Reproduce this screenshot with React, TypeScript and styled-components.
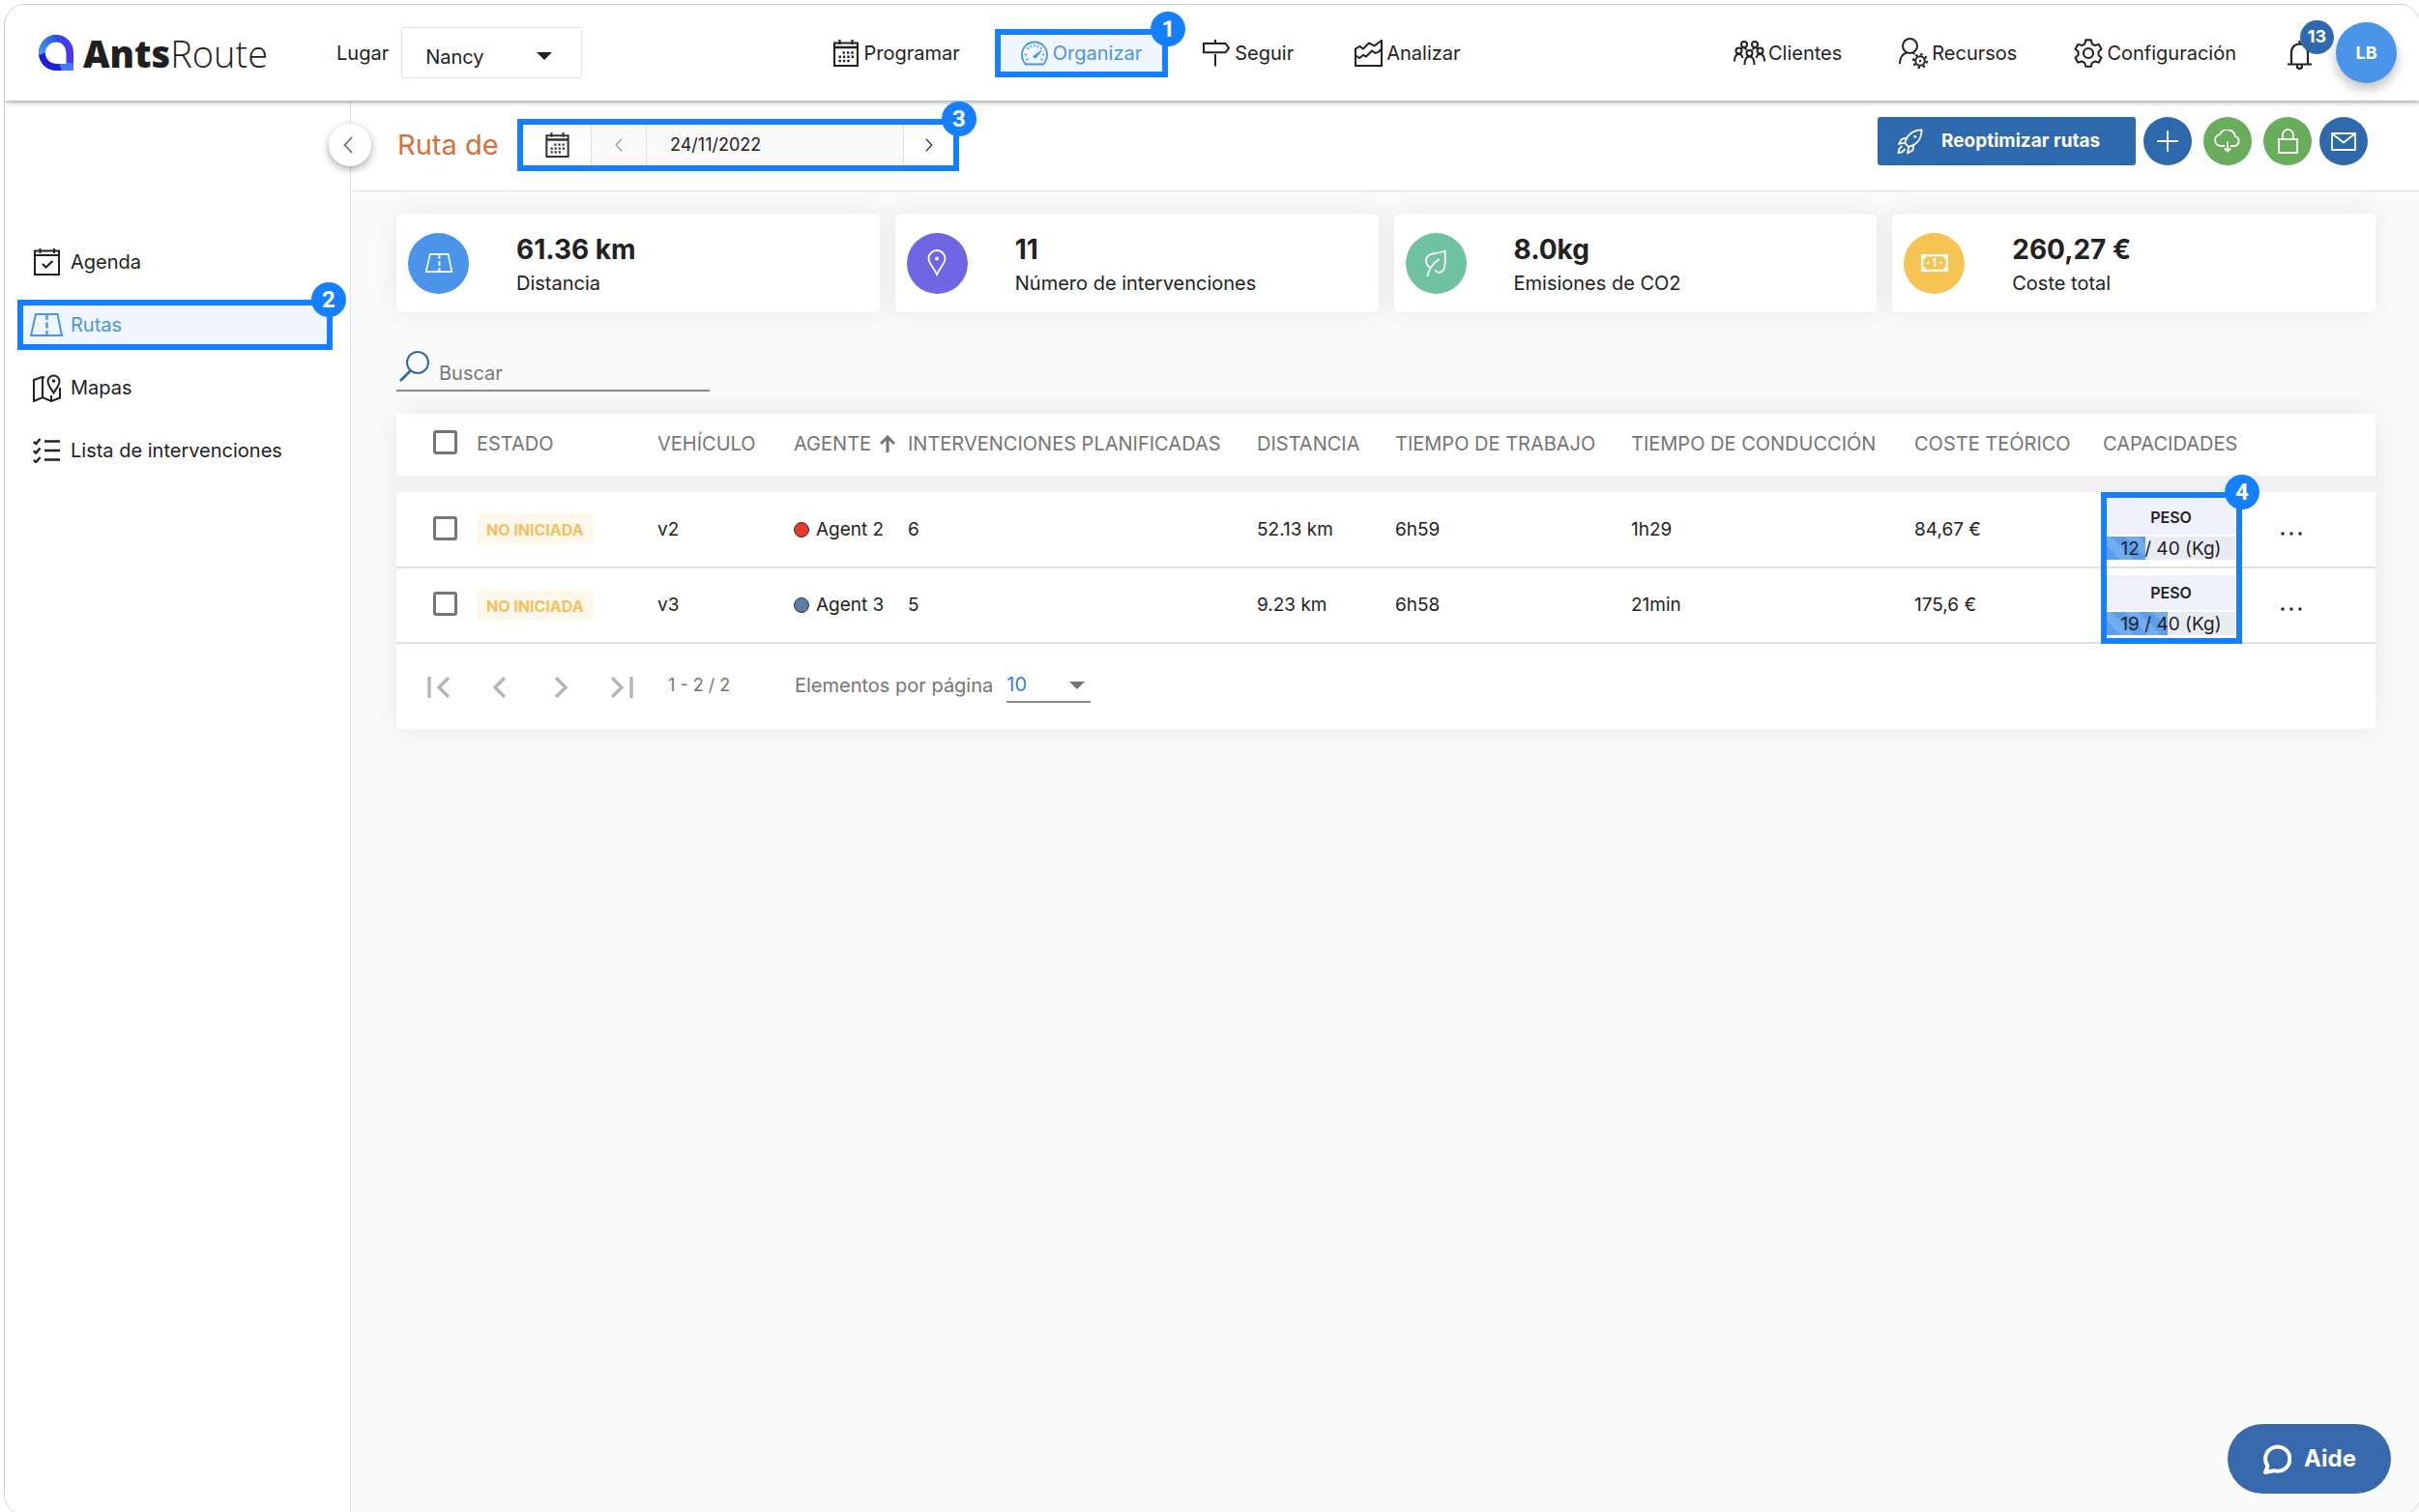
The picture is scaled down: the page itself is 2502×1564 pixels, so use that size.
import React from "react";
import styled, { createGlobalStyle, css } from "styled-components";

const c = {
  accent: "#1580ff",
  brand: "#2f69ad",
  sky: "#4a94e9",
  ink: "#222222",
  grey: "#757575",
  line: "#e0e0e0",
  canvas: "#fafafa",
  tint: "#eff6ff",
};

const GlobalStyle = createGlobalStyle`
  *, *::before, *::after { box-sizing: border-box; }
  body {
    margin: 0;
    background: #ffffff;
    color: ${c.ink};
    font-family: Inter, "Open Sans", sans-serif;
    font-size: 20px;
    line-height: 24px;
  }
  button, input, select { font: inherit; color: inherit; }
  svg { display: block; flex: none; }
`;

/* ---------- icons ---------- */

type IconProps = { w?: number; h?: number };

const CalendarIcon = ({ w = 26, h = 28 }: IconProps) => (
  <svg width={w} height={h} viewBox="0 0 26 28" fill="none" stroke="currentColor" strokeWidth="2.200">
    <path d="M1 3.500h24V27H1z" />
    <path d="M1 8h24" strokeWidth="2.600" />
    <path d="M6.500 0v5M19.500 0v5" />
    <path d="M9.500 13.500h12M5.500 17.800h16M5.500 22h12" strokeWidth="2.400" strokeDasharray="2.400 2" />
  </svg>
);

const GaugeIcon = () => (
  <svg width="28" height="26" viewBox="0 0 28 26" fill="none" stroke="currentColor" strokeWidth="1.800">
    <path d="M5 24.500C2.500 22 1 18.500 1 14.500a13 13 0 0 1 26 0c0 4-1.500 7.500-4 10z" />
    <path d="M14 4v2.500M6.500 7l1.600 1.700M3.800 14.500h2.400M21.500 7l-1.400 1.500M24.200 14.500h-2.400M5.500 20l2-1M22.500 20l-2-1M10 5l.8 2M18 5l-.8 2" strokeWidth="1.400" />
    <path d="M13 16.500 21 10.500 15 18z" fill="currentColor" strokeWidth="1.200" />
  </svg>
);

const SignIcon = () => (
  <svg width="28" height="28" viewBox="0 0 28 28" fill="none" stroke="currentColor" strokeWidth="2">
    <path d="M1 4h22.500L27 8.700l-3.500 4.600H1z" />
    <path d="M13 0v4M13 15v12.500" />
  </svg>
);

const ChartIcon = () => (
  <svg width="29" height="28" viewBox="0 0 29 28" fill="none" stroke="currentColor" strokeWidth="2">
    <path d="M1 27V9.500L5.500 7l3.500 2.500L15 3.500l5.500 2.800L28 1v26z" />
    <path d="M1 16.500l4 2.500 4-3 3 1.500 6-6 3.500 2.500 3-1L28 9.500" />
  </svg>
);

const PeopleIcon = () => (
  <svg width="33" height="26" viewBox="0 0 33 26" fill="none" stroke="currentColor" strokeWidth="2">
    <circle cx="11" cy="4" r="3" />
    <circle cx="22" cy="4" r="3" />
    <circle cx="5.500" cy="10.500" r="3" />
    <circle cx="16.500" cy="13" r="3" />
    <circle cx="27.500" cy="10.500" r="3" />
    <path d="M1 21.500c0-5 1.500-7.500 4.500-7.500 2 0 3.500 1.500 4 4M32 21.500c0-5-1.500-7.500-4.500-7.500-2 0-3.500 1.500-4 4M11.500 25c0-6 1.500-8.500 5-8.500s5 2.500 5 8.500M8.500 8c2-1.500 4-.5 5 1.500M24.500 8c-2-1.500-4-.5-5 1.500" />
  </svg>
);

const UserGearIcon = () => (
  <svg width="30" height="32" viewBox="0 0 30 32" fill="none" stroke="currentColor" strokeWidth="2">
    <circle cx="11.500" cy="8.500" r="7.500" />
    <path d="M1 27c0-6 2.500-10.500 7.500-11.500M14 15.500l2.500 1.500" />
    <circle cx="22" cy="24" r="4.800" />
    <circle cx="22" cy="24" r="6.800" strokeWidth="2.400" strokeDasharray="2.400 2.940" />
    <circle cx="22" cy="24" r="1.200" fill="currentColor" stroke="none" />
  </svg>
);

const GearIcon = () => (
  <svg width="30" height="32" viewBox="0 0 30 32" fill="none" stroke="currentColor" strokeWidth="2.200" strokeLinejoin="round">
    <path d="M12 1.500h6l1 4.200 3.300 1.900 4.200-1.300 3 5.200-3.200 3v3.800l3.200 3-3 5.200-4.200-1.300L19 27.100l-1 3.900h-6l-1-3.900-3.300-1.900-4.200 1.300-3-5.200 3.200-3v-3.800l-3.200-3 3-5.200 4.200 1.300L11 5.700z" transform="translate(1.100 1) scale(.93)" />
    <circle cx="15" cy="16" r="5" />
  </svg>
);

const BellIcon = () => (
  <svg width="25" height="30" viewBox="0 0 25 30" fill="none" stroke="currentColor" strokeWidth="2.200">
    <path d="M4 24V12c0-5 3.500-8.500 8.500-8.500S21 7 21 12v12" />
    <path d="M0 24.500h25M12.500 0v3.500" />
    <path d="M10 25v1.500a2.500 2.500 0 0 0 5 0V25" />
  </svg>
);

const AgendaIcon = () => (
  <svg width="27" height="28" viewBox="0 0 27 28" fill="none" stroke="currentColor" strokeWidth="2">
    <path d="M1 2.500h25V27H1zM1 7h25M6.500 0v5M21 0v5" />
    <path d="M9 16l3.500 3.500 7-6.500" strokeWidth="2.200" />
  </svg>
);

const RoadIcon = ({ w = 34, h = 24 }: IconProps) => (
  <svg width={w} height={h} viewBox="0 0 34 24" fill="none" stroke="currentColor" strokeWidth="2">
    <path d="M6 1h22.500L33 23H1z" />
    <path d="M17.500 2v5M17.500 9.500v6M17.500 18v5" strokeWidth="2.400" />
  </svg>
);

const MapIcon = () => (
  <svg width="29" height="29" viewBox="0 0 29 29" fill="none" stroke="currentColor" strokeWidth="2">
    <path d="M12 3.500 9.500 3 1 6v22l9-4 9 4 9-3.500V14" />
    <path d="M10 3v21M19 28v-6" />
    <path d="M21.500 19.500c-2.500-4.500-6-8-6-12a6 6 0 0 1 12 0c0 4-3.500 7.500-6 12z" />
    <circle cx="21.500" cy="7" r="1.800" fill="currentColor" stroke="none" />
  </svg>
);

const ChecklistIcon = () => (
  <svg width="28" height="26" viewBox="0 0 28 26" fill="none" stroke="currentColor" strokeWidth="2.600">
    <path d="M12 3.500h16M12 13h16M12 22.500h16" />
    <path d="M.8 4l2.500 2L7.500 1M.8 13.500l2.500 2 4.200-5M.8 23l2.500 2 4.200-5" strokeWidth="2.400" />
  </svg>
);

const ChevronIcon = ({ dir = "left", w = 10, h = 18 }: IconProps & { dir?: "left" | "right" }) => (
  <svg width={w} height={h} viewBox="0 0 10 18" fill="none" stroke="currentColor" strokeWidth="1.600">
    <path d={dir === "left" ? "M9 1 1.500 9 9 17" : "M1 1l7.500 8L1 17"} />
  </svg>
);

const RocketIcon = () => (
  <svg width="27" height="27" viewBox="0 0 28 28" fill="none" stroke="currentColor" strokeWidth="1.900" strokeLinejoin="round">
    <path d="M8.500 15.500C10.500 7.500 17 1.500 26.500 1.500 26.500 11 21 17.500 12.500 19.500z" />
    <path d="M10.500 10 5.500 11 2 16.500l6-1M18 17.500 17 23l-5.500 3.500 1-6.500" />
    <circle cx="19.500" cy="8.500" r="1.600" fill="currentColor" stroke="none" />
    <path d="M6 19c-2.500.5-4 3-4.500 7 4-.5 6.500-2 7-4.500" />
  </svg>
);

const PlusIcon = () => (
  <svg width="22" height="22" viewBox="0 0 22 22" stroke="currentColor" strokeWidth="1.800">
    <path d="M11 0v22M0 11h22" />
  </svg>
);

const CloudIcon = () => (
  <svg width="28" height="24" viewBox="0 0 28 24" fill="none" stroke="currentColor" strokeWidth="1.800">
    <path d="M11 17H7a6 6 0 0 1-1-11.900A8.500 8.500 0 0 1 22 7a5.200 5.200 0 0 1-.5 10H17" />
    <path d="M14 12.500V22M10.800 19.500 14 22.500l3.200-3" />
  </svg>
);

const LockIcon = () => (
  <svg width="21" height="26" viewBox="0 0 21 26" fill="none" stroke="currentColor" strokeWidth="1.800">
    <path d="M1 11h19v14H1zM5 11V6.500a5.500 5.500 0 0 1 11 0V11" />
  </svg>
);

const MailIcon = () => (
  <svg width="26" height="19" viewBox="0 0 26 19" fill="none" stroke="currentColor" strokeWidth="1.800">
    <path d="M1 1h24v17H1zM1.500 1.500 13 10.500l11.500-9" />
  </svg>
);

const PinIcon = () => (
  <svg width="20" height="28" viewBox="0 0 20 28" fill="none" stroke="currentColor" strokeWidth="1.800">
    <path d="M10 26C7 19 1.500 14.500 1.500 9.500a8.500 8.500 0 0 1 17 0c0 5-5.500 9.500-8.500 16.500z" />
    <circle cx="10" cy="9.500" r="2" fill="currentColor" stroke="none" />
  </svg>
);

const LeafIcon = () => (
  <svg width="24" height="28" viewBox="0 0 24 28" fill="none" stroke="currentColor" strokeWidth="1.800">
    <path d="M6 18.500C.5 15 .5 8.500 6 5.500 10 3.500 17 4 21.500 1.500 22 9 22.500 15 20.500 20c-1.500 4-6 5.500-9.500 1.500" />
    <path d="M3.500 28C4.500 20 9 14.500 15.500 10" />
  </svg>
);

const BillIcon = () => (
  <svg width="28" height="18" viewBox="0 0 28 18" fill="none" stroke="currentColor">
    <path d="M1.200 1.200h25.600v15.600H1.200z" strokeWidth="2.200" />
    <path d="M2 2h4L2 6zM26 2h-4l4 4zM2 16h4l-4-4zM26 16h-4l4-4z" fill="currentColor" stroke="none" />
    <path d="M12 6.500l2.200-1.500v8" strokeWidth="1.800" />
    <circle cx="7.500" cy="9" r="1.400" fill="currentColor" stroke="none" />
    <circle cx="20.500" cy="9" r="1.400" fill="currentColor" stroke="none" />
  </svg>
);

const SearchIcon = () => (
  <svg width="32" height="32" viewBox="0 0 32 32" fill="none" stroke={c.brand} strokeWidth="2">
    <circle cx="19" cy="12" r="11" />
    <path d="M11.500 20.500 1 31" strokeWidth="2.600" />
  </svg>
);

const SortIcon = () => (
  <svg width="16" height="18" viewBox="0 0 16 18" fill="none" stroke="currentColor" strokeWidth="3">
    <path d="M8 18V2M1 9l7-7L15 9" />
  </svg>
);

const CaretIcon = ({ w = 16, h = 8 }: IconProps) => (
  <svg width={w} height={h} viewBox="0 0 16 8" fill="currentColor">
    <path d="M0 0h16L8 8z" />
  </svg>
);

const PagerIcon = ({ kind }: { kind: "first" | "prev" | "next" | "last" }) => {
  const d = {
    first: "M2 0v22M22 1 12 11l10 10",
    prev: "M17 1 7 11l10 10",
    next: "M7 1l10 10L7 21",
    last: "M2 1l10 10L2 21M22 0v22",
  }[kind];
  return (
    <svg width="24" height="22" viewBox="0 0 24 22" fill="none" stroke="currentColor" strokeWidth="3.400">
      <path d={d} />
    </svg>
  );
};

const DotsIcon = () => (
  <svg width="22" height="4" viewBox="0 0 22 4" fill="currentColor">
    <circle cx="2" cy="2" r="1.700" />
    <circle cx="11" cy="2" r="1.700" />
    <circle cx="20" cy="2" r="1.700" />
  </svg>
);

const ChatIcon = () => (
  <svg width="30" height="31" viewBox="0 0 30 31" fill="none" stroke="currentColor" strokeWidth="4" strokeLinejoin="round">
    <path d="M5.500 22.500A12.600 12.600 0 1 1 12 27.200L3 29z" />
  </svg>
);

const LogoMark = () => (
  <svg width="36" height="37" viewBox="0 0 36 37">
    <defs>
      <clipPath id="logo-ring">
        <path clipRule="evenodd" d="M18 0a18 18 0 0 1 18 18v19H18A18 18.500 0 0 1 18 0zM18 7.500A11 11 0 0 0 18 30h10.500V18.500A10.500 11 0 0 0 18 7.500z" />
      </clipPath>
      <linearGradient id="logo-right" x1="0" y1="0" x2="1" y2="1">
        <stop offset="0" stopColor="#2453dc" />
        <stop offset="1" stopColor="#5a2bf0" />
      </linearGradient>
      <linearGradient id="logo-left" x1="1" y1="0" x2="0" y2="1">
        <stop offset="0" stopColor="#2a55dd" />
        <stop offset="1" stopColor="#45a6fa" />
      </linearGradient>
    </defs>
    <g clipPath="url(#logo-ring)">
      <rect width="36" height="37" fill="url(#logo-right)" />
      <path d="M0 0h18v15L0 22z" fill="url(#logo-left)" />
      <path d="M0 21l9-3 14 12v7H0z" fill="#1c1fe0" />
      <path d="M21 29h15v8H24z" fill="#3f7df5" />
    </g>
  </svg>
);

/* ---------- page shell ---------- */

const Page = styled.div`
  display: flex;
  min-height: 100vh;
  overflow: hidden;
`;

const Frame = styled.div`
  display: flex;
  flex: 1;
  flex-direction: column;
  margin: 4px -2px -4px 4px;
  border: 1px solid #cccccc;
  border-radius: 22px;
  background: #ffffff;
  overflow: hidden;
`;

const Header = styled.header`
  position: relative;
  z-index: 2;
  display: flex;
  align-items: center;
  height: 99px;
  padding: 0 24px 0 35px;
  background: #ffffff;
  box-shadow: 0 1px 6px rgba(0, 0, 0, 0.45);
`;

const Logo = styled.a`
  display: flex;
  align-items: center;
  gap: 10px;
  width: 308px;
  color: #1f1f1f;
  font-family: "Open Sans", sans-serif;
  font-size: 38px;
  font-weight: 300;
  line-height: 44px;
  text-decoration: none;
  b { font-weight: 800; }
`;

const PlaceField = styled.div`
  display: flex;
  align-items: center;
  gap: 13px;
`;

const SelectBox = styled.span<{ $lined?: boolean }>`
  position: relative;
  display: flex;
  align-items: center;
  select {
    appearance: none;
    border: 0;
    outline: 0;
    background: transparent;
    width: ${(p) => (p.$lined ? 87 : 187)}px;
    height: ${(p) => (p.$lined ? 36 : 53)}px;
    ${(p) =>
      p.$lined
        ? css`
            border-bottom: 2px solid #8a8a8a;
            color: #3b7de0;
            padding: 0;
          `
        : css`
            border: 1px solid ${c.line};
            border-radius: 3px;
            padding: 8px 24px 0;
          `}
  }
  svg {
    position: absolute;
    top: ${(p) => (p.$lined ? 14 : 26)}px;
    right: ${(p) => (p.$lined ? 6 : 31)}px;
    color: ${(p) => (p.$lined ? c.grey : c.ink)};
    pointer-events: none;
  }
`;

const LinkBar = styled.nav<{ $main?: boolean }>`
  display: flex;
  align-items: center;
  gap: ${(p) => (p.$main ? 9 : 6)}px;
  margin: ${(p) => (p.$main ? "0 auto" : "0")};
`;

const highlight = css`
  border-color: ${c.accent};
  background: ${c.tint};
  color: ${c.sky};
`;

const NavLink = styled.a<{ $active?: boolean }>`
  position: relative;
  display: flex;
  align-items: center;
  gap: 5px;
  height: 50px;
  padding: 0 21px;
  border: 6px solid transparent;
  color: ${c.ink};
  text-decoration: none;
  white-space: nowrap;
  ${(p) => p.$active && highlight}
`;

const IconSlot = styled.span<{ $w: number }>`
  display: flex;
  justify-content: center;
  width: ${(p) => p.$w}px;
`;

const Marker = styled.span`
  position: absolute;
  top: -24px;
  right: -24px;
  z-index: 3;
  display: grid;
  place-items: center;
  width: 36px;
  height: 36px;
  border-radius: 50%;
  background: ${c.accent};
  color: #ffffff;
  font-family: Roboto, sans-serif;
  font-size: 24px;
  font-weight: 700;
`;

const Account = styled.div`
  display: flex;
  align-items: center;
  gap: 25px;
  margin-left: 26px;
`;

const BellButton = styled.button`
  position: relative;
  padding: 4px 0 0;
  border: 0;
  background: none;
`;

const BellCount = styled.span`
  position: absolute;
  top: -17px;
  left: 13px;
  display: grid;
  place-items: center;
  width: 35px;
  height: 35px;
  border-radius: 50%;
  background: ${c.brand};
  color: #ffffff;
  font-size: 18px;
  font-weight: 700;
`;

const Avatar = styled.button`
  width: 63px;
  height: 63px;
  padding: 0;
  border: 0;
  border-radius: 50%;
  background: ${c.sky};
  color: #ffffff;
  font-size: 18px;
  font-weight: 700;
  box-shadow: 0 6px 12px rgba(0, 0, 0, 0.25);
`;

const Body = styled.div`
  display: flex;
  flex: 1;
`;

const Sidebar = styled.aside`
  position: relative;
  width: 358px;
  padding: 141px 18px 0 13px;
  border-right: 1px solid ${c.line};
  background: #ffffff;
`;

const SideNav = styled.nav`
  display: flex;
  flex-direction: column;
  gap: 13px;
`;

const SideLink = styled(NavLink)`
  height: 52px;
  padding: 0 7px;
  gap: 8px;
  ${Marker} { right: -20px; }
`;

const CollapseButton = styled.button`
  position: absolute;
  top: 24px;
  right: -22px;
  z-index: 1;
  display: grid;
  place-items: center;
  width: 44px;
  height: 44px;
  padding: 0 4px 0 0;
  border: 0;
  border-radius: 50%;
  background: #ffffff;
  color: #666666;
  box-shadow: 0 3px 8px rgba(0, 0, 0, 0.35);
`;

const Main = styled.main`
  flex: 1;
  min-width: 0;
  background: ${c.canvas};
`;

/* ---------- title bar ---------- */

const TitleBar = styled.div`
  display: flex;
  align-items: center;
  justify-content: space-between;
  height: 94px;
  padding: 0 54px 1px 48px;
  border-bottom: 1px solid ${c.line};
  background: #ffffff;
`;

const TitleGroup = styled.div`
  display: flex;
  align-items: center;
`;

const Title = styled.h1`
  width: 124px;
  margin: 0;
  color: #d8703c;
  font-size: 29px;
  font-weight: 400;
  line-height: 32px;
  white-space: nowrap;
`;

const DatePicker = styled.div`
  position: relative;
  display: flex;
  height: 54px;
  border: 6px solid ${c.accent};
  font-size: 18px;
`;

const DateButton = styled.button<{ $w: number; $muted?: boolean }>`
  display: grid;
  place-items: center;
  width: ${(p) => p.$w}px;
  padding: 0;
  border: 0 solid ${c.line};
  border-left-width: ${(p) => (p.$muted ? 1 : 0)}px;
  background: ${(p) => (p.$muted ? c.canvas : "#ffffff")};
  color: ${(p) => (p.$muted ? "#999999" : "#333333")};
`;

const DateInput = styled.input`
  width: 267px;
  padding: 0 24px;
  border: 1px solid ${c.line};
  border-width: 0 1px;
  outline: 0;
  background: ${c.canvas};
`;

const Actions = styled.div`
  display: flex;
  align-items: center;
  gap: 12px;
  padding-bottom: 8px;
`;

const ActionPair = styled.div`
  display: flex;
  gap: 8px;
`;

const PrimaryButton = styled.button`
  display: flex;
  align-items: center;
  gap: 19px;
  width: 267px;
  height: 50px;
  padding: 0 20px;
  border: 0;
  border-radius: 3px;
  background: ${c.brand};
  color: #ffffff;
  font-size: 19px;
  font-weight: 700;
  white-space: nowrap;
`;

const RoundButton = styled.button<{ $green?: boolean }>`
  display: grid;
  place-items: center;
  width: 50px;
  height: 50px;
  padding: 0;
  border: 0;
  border-radius: 50%;
  background: ${(p) => (p.$green ? "#68ad5c" : c.brand)};
  color: #ffffff;
`;

/* ---------- content ---------- */

const Content = styled.div`
  padding: 23px 46px 40px 47px;
`;

const Cards = styled.section`
  display: grid;
  grid-template-columns: repeat(4, 1fr);
  gap: 16px;
`;

const Card = styled.article`
  display: flex;
  align-items: center;
  gap: 49px;
  height: 102px;
  padding: 0 12px;
  border-radius: 6px;
  background: #ffffff;
  box-shadow: 0 0 28px rgba(60, 60, 80, 0.09);
`;

const CardIcon = styled.span<{ $bg: string }>`
  display: grid;
  place-items: center;
  width: 63px;
  height: 63px;
  border-radius: 50%;
  background: ${(p) => p.$bg};
  color: #ffffff;
`;

const CardValue = styled.div`
  padding-top: 2px;
  font-size: 28px;
  font-weight: 700;
  line-height: 34px;
`;

const CardLabel = styled.div`
  padding-top: 6px;
`;

const SearchField = styled.label`
  display: flex;
  align-items: flex-end;
  gap: 9px;
  width: 324px;
  height: 46px;
  margin: 36px 0 23px;
  padding: 0 0 5px 3px;
  border-bottom: 2px solid #8a8a8a;
  svg { align-self: center; }
  input {
    flex: 1;
    min-width: 0;
    height: 24px;
    padding: 0;
    border: 0;
    outline: 0;
    background: none;
  }
  input::placeholder { color: #777777; opacity: 1; }
`;

const Panel = styled.section`
  box-shadow: 0 0 28px rgba(60, 60, 80, 0.09);
`;

const Grid = styled.table`
  width: 100%;
  table-layout: fixed;
  border-collapse: collapse;
  background: #ffffff;
  th, td {
    padding: 0;
    text-align: left;
    white-space: nowrap;
    vertical-align: middle;
  }
  th {
    height: 64px;
    padding-bottom: 2px;
    color: ${c.grey};
    font-weight: 400;
  }
`;

const SpacerRow = styled.tr`
  td { height: 17px; background: #f1f1f3; }
`;

const Row = styled.tr`
  font-size: 19px;
  td {
    height: 78px;
    border-bottom: 2px solid ${c.line};
  }
`;

const CheckBox = styled.input`
  appearance: none;
  display: block;
  width: 25px;
  height: 25px;
  margin: 0 0 3px 38px;
  border: 3px solid ${c.grey};
  border-radius: 3px;
`;

const ColumnLabel = styled.span`
  display: flex;
  align-items: center;
  gap: 9px;
`;

const Status = styled.span`
  display: inline-block;
  padding: 4px 10px 3px;
  border-radius: 4px;
  background: #fef8ec;
  color: #f4c05f;
  font-size: 16px;
  font-weight: 700;
`;

const Agent = styled.span`
  display: flex;
  align-items: center;
  gap: 7px;
`;

const AgentDot = styled.i<{ $color: string }>`
  width: 16px;
  height: 16px;
  border: 1px solid #333333;
  border-radius: 50%;
  background: ${(p) => p.$color};
`;

const CapacityCell = styled.td`
  position: relative;
`;

const CapacityHighlight = styled.div`
  position: absolute;
  top: 0;
  left: -2px;
  z-index: 1;
  width: 146px;
  height: 157px;
  border: 6px solid ${c.accent};
  pointer-events: none;
`;

const Capacity = styled.div`
  display: grid;
  gap: 2px;
  width: 133px;
  margin-left: 4px;
  text-align: center;
`;

const CapacityName = styled.div`
  background: #eef0fb;
  font-size: 16px;
  font-weight: 600;
  line-height: 36px;
`;

const CapacityBar = styled.div`
  position: relative;
  height: 24px;
  background: #e9ebf3;
  line-height: 26px;
  span { position: relative; }
`;

const CapacityFill = styled.div`
  position: absolute;
  inset: 0 auto 0 0;
  background: repeating-linear-gradient(45deg, #5b9eec 0 10px, #72adf0 10px 20px);
`;

const MoreButton = styled.button`
  display: block;
  padding: 8px 0 0;
  border: 0;
  background: none;
`;

const Pager = styled.footer`
  display: flex;
  align-items: center;
  height: 88px;
  padding: 0 32px 3px;
  background: #ffffff;
  color: ${c.grey};
`;

const PageButtons = styled.div`
  display: flex;
  gap: 39px;
  padding-top: 4px;
`;

const PageButton = styled.button`
  padding: 0;
  border: 0;
  background: none;
  color: #b5b5b5;
`;

const PageRange = styled.span`
  width: 131px;
  margin-left: 36px;
  font-size: 18px;
`;

const PageSize = styled.label`
  display: flex;
  align-items: center;
  gap: 14px;
`;

const HelpButton = styled.button`
  position: fixed;
  right: 29px;
  bottom: 19px;
  z-index: 4;
  display: flex;
  align-items: center;
  gap: 13px;
  height: 72px;
  padding: 0 36px;
  border: 0;
  border-radius: 36px;
  background: #3869ad;
  color: #ffffff;
  font-size: 24px;
  font-weight: 700;
`;

/* ---------- data ---------- */

const mainLinks = [
  { label: "Programar", icon: <CalendarIcon /> },
  { label: "Organizar", icon: <GaugeIcon />, active: true },
  { label: "Seguir", icon: <SignIcon /> },
  { label: "Analizar", icon: <ChartIcon /> },
];

const adminLinks = [
  { label: "Clientes", icon: <PeopleIcon /> },
  { label: "Recursos", icon: <UserGearIcon /> },
  { label: "Configuración", icon: <GearIcon /> },
];

const sideLinks = [
  { label: "Agenda", icon: <AgendaIcon /> },
  { label: "Rutas", icon: <RoadIcon />, active: true },
  { label: "Mapas", icon: <MapIcon /> },
  { label: "Lista de intervenciones", icon: <ChecklistIcon /> },
];

const stats = [
  { value: "61.36 km", label: "Distancia", color: "#4a94e9", icon: <RoadIcon w={30} h={20} /> },
  { value: "11", label: "Número de intervenciones", color: "#6f66e4", icon: <PinIcon /> },
  { value: "8.0kg", label: "Emisiones de CO2", color: "#6fc3a0", icon: <LeafIcon /> },
  { value: "260,27 €", label: "Coste total", color: "#f5c453", icon: <BillIcon /> },
];

const columnWidths = [83, 187, 141, 118, 361, 143, 244, 293, 195, 184, 98];

const routes = [
  { vehicle: "v2", agent: "Agent 2", color: "#e8372c", stops: 6, distance: "52.13 km", work: "6h59", drive: "1h29", cost: "84,67 €", load: 12 },
  { vehicle: "v3", agent: "Agent 3", color: "#5b7ba8", stops: 5, distance: "9.23 km", work: "6h58", drive: "21min", cost: "175,6 €", load: 19 },
];

const capacityLimit = 40;

/* ---------- app ---------- */

export default function App() {
  return (
    <Page>
      <GlobalStyle />
      <Frame>
        <Header>
          <Logo href="#" aria-label="AntsRoute">
            <LogoMark />
            <span><b>Ants</b>Route</span>
          </Logo>
          <PlaceField>
            <label htmlFor="place">Lugar</label>
            <SelectBox>
              <select id="place" defaultValue="Nancy">
                <option>Nancy</option>
              </select>
              <CaretIcon />
            </SelectBox>
          </PlaceField>
          <LinkBar $main>
            {mainLinks.map((l) => (
              <NavLink key={l.label} href="#" $active={l.active}>
                <IconSlot $w={28}>{l.icon}</IconSlot>
                {l.label}
                {l.active && <Marker>1</Marker>}
              </NavLink>
            ))}
          </LinkBar>
          <LinkBar>
            {adminLinks.map((l) => (
              <NavLink key={l.label} href="#">
                <IconSlot $w={28}>{l.icon}</IconSlot>
                {l.label}
              </NavLink>
            ))}
          </LinkBar>
          <Account>
            <BellButton aria-label="Notificaciones">
              <BellIcon />
              <BellCount>13</BellCount>
            </BellButton>
            <Avatar>LB</Avatar>
          </Account>
        </Header>
        <Body>
          <Sidebar>
            <CollapseButton aria-label="Contraer menú">
              <ChevronIcon w={10} h={18} />
            </CollapseButton>
            <SideNav>
              {sideLinks.map((l) => (
                <SideLink key={l.label} href="#" $active={l.active}>
                  <IconSlot $w={34}>{l.icon}</IconSlot>
                  {l.label}
                  {l.active && <Marker>2</Marker>}
                </SideLink>
              ))}
            </SideNav>
          </Sidebar>
          <Main>
            <TitleBar>
              <TitleGroup>
                <Title>Ruta de</Title>
                <DatePicker>
                  <DateButton $w={70} aria-label="Abrir calendario"><CalendarIcon w={25} h={26} /></DateButton>
                  <DateButton $w={57} $muted aria-label="Día anterior"><ChevronIcon w={8} h={14} /></DateButton>
                  <DateInput aria-label="Fecha" defaultValue="24/11/2022" />
                  <DateButton $w={51} aria-label="Día siguiente"><ChevronIcon dir="right" w={8} h={14} /></DateButton>
                  <Marker>3</Marker>
                </DatePicker>
              </TitleGroup>
              <Actions>
                <ActionPair>
                  <PrimaryButton><RocketIcon />Reoptimizar rutas</PrimaryButton>
                  <RoundButton aria-label="Añadir"><PlusIcon /></RoundButton>
                </ActionPair>
                <RoundButton $green aria-label="Descargar"><CloudIcon /></RoundButton>
                <ActionPair>
                  <RoundButton $green aria-label="Bloquear"><LockIcon /></RoundButton>
                  <RoundButton aria-label="Enviar"><MailIcon /></RoundButton>
                </ActionPair>
              </Actions>
            </TitleBar>
            <Content>
              <Cards>
                {stats.map((s) => (
                  <Card key={s.label}>
                    <CardIcon $bg={s.color}>{s.icon}</CardIcon>
                    <div>
                      <CardValue>{s.value}</CardValue>
                      <CardLabel>{s.label}</CardLabel>
                    </div>
                  </Card>
                ))}
              </Cards>
              <SearchField>
                <SearchIcon />
                <input type="search" placeholder="Buscar" aria-label="Buscar" />
              </SearchField>
              <Panel>
                <Grid>
                  <colgroup>
                    {columnWidths.map((w, i) => <col key={i} width={w} />)}
                  </colgroup>
                  <thead>
                    <tr>
                      <th><CheckBox type="checkbox" aria-label="Seleccionar todo" /></th>
                      <th>ESTADO</th>
                      <th>VEHÍCULO</th>
                      <th><ColumnLabel>AGENTE <SortIcon /></ColumnLabel></th>
                      <th>INTERVENCIONES PLANIFICADAS</th>
                      <th>DISTANCIA</th>
                      <th>TIEMPO DE TRABAJO</th>
                      <th>TIEMPO DE CONDUCCIÓN</th>
                      <th>COSTE TEÓRICO</th>
                      <th>CAPACIDADES</th>
                      <th />
                    </tr>
                  </thead>
                  <tbody>
                    <SpacerRow><td colSpan={11} /></SpacerRow>
                    {routes.map((r, i) => (
                      <Row key={r.vehicle}>
                        <td><CheckBox type="checkbox" aria-label={`Seleccionar ${r.vehicle}`} /></td>
                        <td><Status>NO INICIADA</Status></td>
                        <td>{r.vehicle}</td>
                        <td><Agent><AgentDot $color={r.color} />{r.agent}</Agent></td>
                        <td>{r.stops}</td>
                        <td>{r.distance}</td>
                        <td>{r.work}</td>
                        <td>{r.drive}</td>
                        <td>{r.cost}</td>
                        <CapacityCell>
                          <Capacity>
                            <CapacityName>PESO</CapacityName>
                            <CapacityBar>
                              <CapacityFill style={{ width: `${(r.load / capacityLimit) * 100}%` }} />
                              <span>{r.load} / {capacityLimit} (Kg)</span>
                            </CapacityBar>
                          </Capacity>
                          {i === 0 && <CapacityHighlight><Marker>4</Marker></CapacityHighlight>}
                        </CapacityCell>
                        <td><MoreButton aria-label="Más opciones"><DotsIcon /></MoreButton></td>
                      </Row>
                    ))}
                  </tbody>
                </Grid>
                <Pager>
                  <PageButtons>
                    <PageButton aria-label="Primera página"><PagerIcon kind="first" /></PageButton>
                    <PageButton aria-label="Página anterior"><PagerIcon kind="prev" /></PageButton>
                    <PageButton aria-label="Página siguiente"><PagerIcon kind="next" /></PageButton>
                    <PageButton aria-label="Última página"><PagerIcon kind="last" /></PageButton>
                  </PageButtons>
                  <PageRange>1 - 2 / 2</PageRange>
                  <PageSize>
                    Elementos por página
                    <SelectBox $lined>
                      <select defaultValue="10">
                        <option>10</option>
                      </select>
                      <CaretIcon />
                    </SelectBox>
                  </PageSize>
                </Pager>
              </Panel>
            </Content>
          </Main>
        </Body>
      </Frame>
      <HelpButton><ChatIcon />Aide</HelpButton>
    </Page>
  );
}
